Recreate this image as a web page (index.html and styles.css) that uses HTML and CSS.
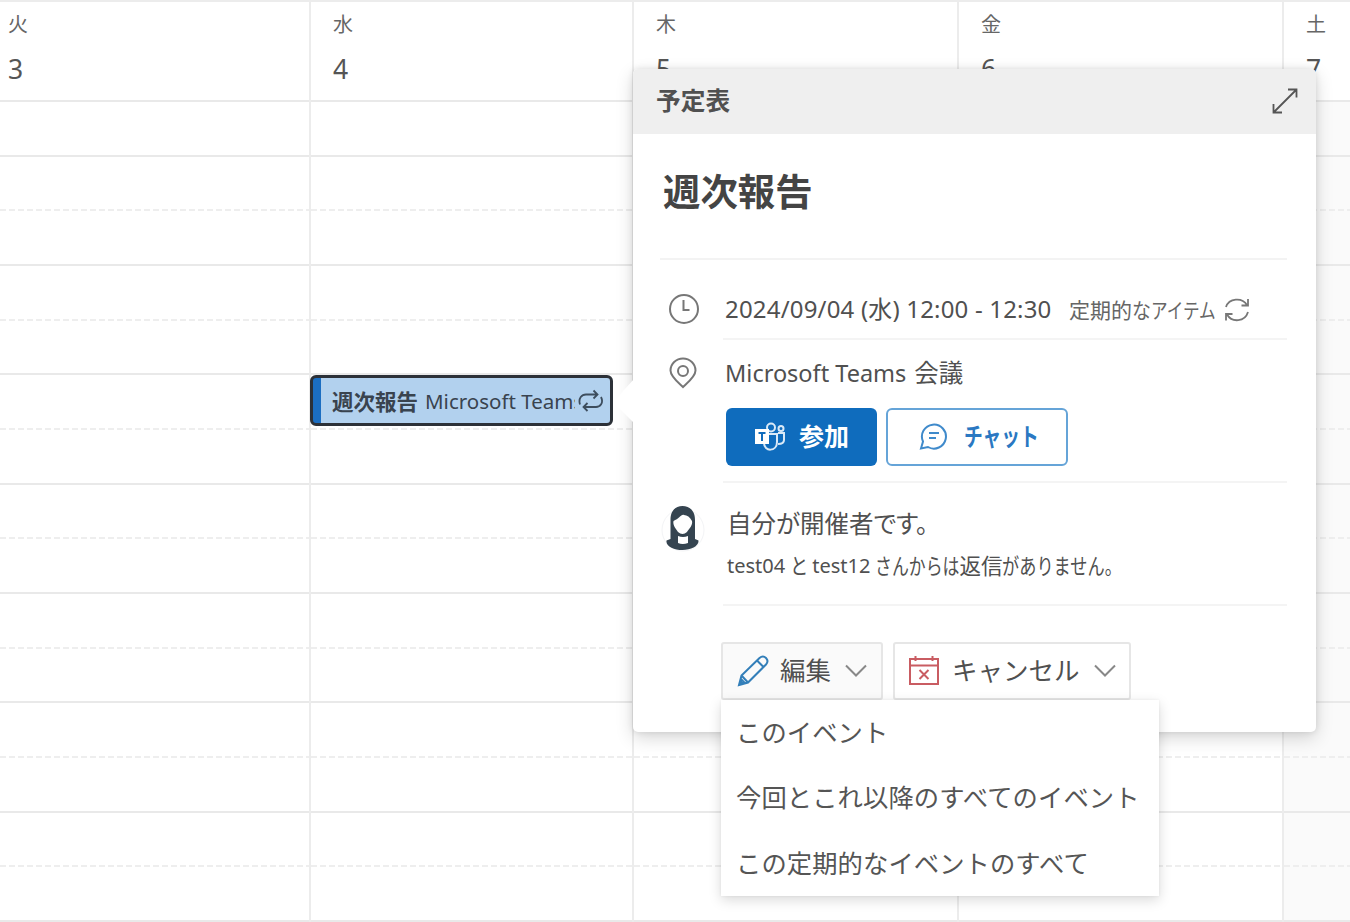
FILE: index.html
```html
<!DOCTYPE html>
<html lang="ja">
<head>
<meta charset="utf-8">
<title>予定表</title>
<link rel="stylesheet" href="styles.css">
</head>
<body>
<main class="calendar">
  <section class="day"><header class="day-head"><span class="weekday">火</span><span class="date">3</span></header><div class="slots"><i></i><i></i><i></i><i></i><i></i><i></i><i></i><i></i><i></i><i></i><i></i><i></i><i></i><i></i><i></i></div></section>
  <section class="day"><header class="day-head"><span class="weekday">水</span><span class="date">4</span></header><div class="slots"><i></i><i></i><i></i><i></i><i></i><i></i><i></i><i></i><i></i><i></i><i></i><i></i><i></i><i></i><i></i></div></section>
  <section class="day"><header class="day-head"><span class="weekday">木</span><span class="date">5</span></header><div class="slots"><i></i><i></i><i></i><i></i><i></i><i></i><i></i><i></i><i></i><i></i><i></i><i></i><i></i><i></i><i></i></div></section>
  <section class="day"><header class="day-head"><span class="weekday">金</span><span class="date">6</span></header><div class="slots"><i></i><i></i><i></i><i></i><i></i><i></i><i></i><i></i><i></i><i></i><i></i><i></i><i></i><i></i><i></i></div></section>
  <section class="day weekend"><header class="day-head"><span class="weekday">土</span><span class="date">7</span></header><div class="slots"><i></i><i></i><i></i><i></i><i></i><i></i><i></i><i></i><i></i><i></i><i></i><i></i><i></i><i></i><i></i></div></section>
</main>

<div class="event">
  <span class="event-title">週次報告</span>
  <span class="event-place">Microsoft Teams</span>
  <svg class="event-icon" width="26" height="24" viewBox="0 0 26 24"><path d="M2 15.500C0 9 4 5.500 8 5.500H19M15.500 1.500L19.500 5.500L15.500 9.500M23 8C26 14 22 18 18 18H6M9.500 14L5.500 18L9.500 22"/></svg>
</div>

<article class="card">
  <svg class="beak" width="21" height="44" viewBox="0 0 21 44"><path d="M21 0L0 23L21 44Z"/></svg>
  <header class="card-head">
    <span>予定表</span>
    <svg width="28" height="28" viewBox="0 0 28 28"><path d="M3 25L25 3M17 2.500H25.500V10.500M2.500 17V25.500H11"/></svg>
  </header>
  <div class="card-body">
    <h1 class="title">週次報告</h1>
    <div class="row row-time">
      <svg class="row-icon" width="32" height="32" viewBox="0 0 32 32"><circle cx="16" cy="16" r="14"/><path d="M15.500 7V17H21.500"/></svg>
      <div class="row-content">
        <span class="when">2024/09/04 (水) 12:00 - 12:30</span>
        <span class="recurring">定期的<span class="kana kana-na">な</span><span class="kana kana-item">アイテム</span></span>
        <svg class="sync" width="26" height="24" viewBox="0 0 26 24"><path d="M2 9C5 0 18 -1 23 7M24 1V7.500H17.500M24 14C21 24 8 25 3 16.500M2 22.500V16H8.500"/></svg>
      </div>
    </div>
    <div class="row row-place">
      <svg class="row-icon" width="32" height="32" viewBox="0 0 32 32"><path d="M15 30C12 27 2.500 20 2.500 13.500A12.500 12 0 0 1 27.500 13.500C27.500 20 18 27 15 30Z"/><circle cx="15" cy="14" r="5"/></svg>
      <div class="row-content">
        <div class="place"><span class="latin">Microsoft Teams</span><span>会議</span></div>
        <div class="actions">
          <button class="btn join">
            <svg width="32" height="30" viewBox="0 0 32 30"><circle cx="17" cy="5.500" r="4"/><circle cx="27" cy="6.500" r="2.500"/><path d="M11 12H23V20C23 30 10 30 10 21M24 11H30V18Q30 22 24 22"/><path class="solid" d="M1 7H15V22H1Z"/><path class="tee" d="M4.500 11H11.500M8 11V19"/></svg>
            <span>参加</span>
          </button>
          <button class="btn chat">
            <svg width="30" height="30" viewBox="0 0 30 30"><path d="M2 27.500L4 20.500A12 12 0 1 1 9 26Z"/><path d="M10 12H20M10 17H17"/></svg>
            <span class="kana kana-chat">チャット</span>
          </button>
        </div>
      </div>
    </div>
    <div class="row row-people">
      <svg class="avatar" width="44" height="48" viewBox="0 0 44 48"><circle class="ring" cx="22" cy="25" r="21"/><path class="hair" d="M9.500 34V15C9.500 5 15 1 21.500 1S34 5 34 15V34L37.500 35.500C38 41 30 45 21.500 45S4.500 41 5.500 35.500Z"/><path class="face" d="M23 10C20 9 18 14 12.500 16C11.500 20 15 24 17 27Q21.500 31 26 27C28 24 32 20 31 16C29 12 26 10 23 10Z"/><path class="face" d="M17 31V38Q21.500 40 27 38V31Q22 33 17 31Z"/></svg>
      <div class="row-content">
        <p class="organizer">自分が開催者です。</p>
        <p class="replies"><span class="latin">test04</span><span class="kana kana-to">と</span><span class="latin">test12</span><span class="kana kana-from">さんからは</span>返信<span class="kana kana-none">がありません。</span></p>
      </div>
    </div>
    <footer class="tools">
      <button class="tool edit">
        <svg width="32" height="32" viewBox="0 0 32 32"><path d="M2 30L4.500 20.500L22.500 3Q26 0 29 3Q32 6 29 9.500L11 27.500ZM20 5.500L26.500 12M4.500 20.500L11 27.500M2 30L5 25L7 27Z"/></svg>
        <span>編集</span>
        <svg class="chevron" width="22" height="14" viewBox="0 0 22 14"><path d="M1 1.500L11 11.500L21 1.500"/></svg>
      </button>
      <button class="tool cancel">
        <svg width="32" height="30" viewBox="0 0 32 30"><path d="M2 3H30V28H2ZM2 9.500H30M7.500 0V5M24.500 0V5"/><path d="M11.500 14L20.500 23M20.500 14L11.500 23"/></svg>
        <span>キャンセル</span>
        <svg class="chevron" width="22" height="14" viewBox="0 0 22 14"><path d="M1 1.500L11 11.500L21 1.500"/></svg>
      </button>
    </footer>
  </div>
</article>

<ul class="menu">
  <li>このイベント</li>
  <li>今回とこれ以降のすべてのイベント</li>
  <li>この定期的なイベントのすべて</li>
</ul>
</body>
</html>
```
FILE: styles.css
```css
* { box-sizing: border-box; }
body {
  margin: 0;
  width: 1350px;
  height: 922px;
  position: relative;
  overflow: hidden;
  background: #fff;
  color: #505050;
  font-family: "Noto Sans", "Noto Sans CJK JP", sans-serif;
}
svg { fill: none; flex: none; }
button, h1, p, ul { margin: 0; padding: 0; font: inherit; color: inherit; }

/* week grid */
.calendar {
  display: grid;
  grid-template-columns: 311px 323px 325px 325px 1fr;
  height: 922px;
}
.day { display: flex; flex-direction: column; border-right: 2px solid #ececec; }
.day:last-child { border-right: 0; }
.day-head {
  height: 102px;
  border-top: 2px solid #ececec;
  border-bottom: 2px solid #e9e9e9;
  padding: 8px 0 0 22px;
  display: flex;
  flex-direction: column;
}
.day:first-child .day-head { padding-left: 8px; }
.weekday { font-size: 20px; line-height: 30px; color: #666; }
.date { font-size: 26.500px; line-height: 36px; margin-top: 11px; color: #555; }
.slots { flex: 1; display: grid; grid-template-rows: repeat(15, 1fr); }
.slots i { border-bottom: 2px solid #e9e9e9; }
.slots i:nth-child(even) {
  border: 0;
  background: repeating-linear-gradient(90deg, #eee 0 6px, transparent 6px 9px) bottom / 100% 2px no-repeat;
}
.weekend .slots { background: #fafafa; }

/* selected event */
.event {
  position: absolute;
  left: 310px;
  top: 375px;
  width: 303px;
  height: 51px;
  border: 3px solid #2c3138;
  border-radius: 6px;
  background: linear-gradient(90deg, #1b6ec2 8px, #b2d1ee 8px);
  display: flex;
  align-items: center;
  padding-left: 19px;
  color: #39434e;
  white-space: nowrap;
}
.event-title { font-size: 21.500px; font-weight: 700; width: 93px; }
.event-place { font-size: 20.500px; width: 150px; overflow: hidden; }
.event-icon { stroke: #3d4d5d; stroke-width: 1.800; margin-left: 3px; }

/* peek card */
.card {
  position: absolute;
  left: 633px;
  top: 69px;
  width: 683px;
  height: 663px;
  border-radius: 5px;
  background: #fff;
  box-shadow: 0 6px 18px rgba(0, 0, 0, .16), 0 0 6px rgba(0, 0, 0, .1);
}
.beak { position: absolute; left: -20px; top: 310px; fill: #fff; }
.card-head {
  height: 65px;
  padding: 0 17px 0 23px;
  border-radius: 5px 5px 0 0;
  background: #efefef;
  display: flex;
  align-items: center;
  justify-content: space-between;
  font-size: 24.700px;
  font-weight: 700;
}
.card-head span { padding-bottom: 5px; }
.card-head svg { stroke: #555; stroke-width: 1.800; margin-bottom: 2px; }
.card-body { padding: 0 29px 0 27px; }
.title {
  height: 126px;
  border-bottom: 2px solid #f3f3f3;
  padding: 31px 0 0 3px;
  font-size: 37.400px;
  line-height: 54px;
  font-weight: 700;
  color: #444;
}
.row { display: grid; grid-template-columns: 63px 1fr; }
.row-content { border-bottom: 2px solid #f4f4f4; padding-left: 2px; }
.row-icon { margin-left: 8px; stroke: #777; stroke-width: 2; }
.row-time .row-content { height: 80px; padding-top: 20px; display: flex; align-items: flex-start; line-height: 60px; }
.row-time .row-icon { margin-top: 33px; }
.when { font-size: 24px; line-height: 58px; letter-spacing: .18px; width: 344px; white-space: nowrap; }
.recurring { font-size: 21px; white-space: nowrap; width: 151px; color: #666; display: flex; }
.sync { margin-top: 18px; margin-left: 4px; stroke: #777; stroke-width: 1.800; }
.kana { display: block; flex: none; white-space: nowrap; transform-origin: 0 50%; }
.kana-na { width: 19px; transform: scaleX(.9); }
.kana-item { width: 66px; transform: scaleX(.79); }
.row-place .row-content { height: 143px; padding-top: 13px; }
.row-place .row-icon { margin-top: 17px; }
.place { display: flex; gap: 8px; font-size: 24.500px; line-height: 40px; }
.place .latin { font-size: 23.500px; }
.actions { display: flex; gap: 9px; margin: 15px 0 0 1px; }
.btn {
  height: 58px;
  border-radius: 6px;
  display: flex;
  align-items: center;
  font-size: 25px;
  font-weight: 700;
  border: 0;
}
.btn span { padding-bottom: 4px; }
.join { width: 151px; padding-left: 28px; gap: 13px; background: #0f6cbd; color: #fff; }
.join svg { stroke: #d9e9f7; stroke-width: 2; }
.join .solid { fill: #fff; stroke: none; }
.join .tee { stroke: #0f6cbd; }
.chat { width: 182px; padding-left: 31px; gap: 15px; background: #fff; color: #2a78c2; border: 2px solid #65a4d8; }
.chat svg { stroke: #3f8acb; stroke-width: 2; margin-bottom: 2px; }
.kana-chat { transform: scaleX(.75); width: 75px; }
.row-people .row-content { height: 123px; padding: 21px 0 0 4px; }
.avatar { margin: 22px 0 0 1px; }
.avatar .ring { stroke: #f3f4f6; }
.avatar .hair { fill: #354450; }
.avatar .face { fill: #fff; }
.organizer { font-size: 24.500px; line-height: 40px; font-feature-settings: "palt"; }
.replies { font-size: 21.500px; line-height: 40px; margin-top: 2px; display: flex; white-space: nowrap; }
.replies .latin { font-size: 20px; }
.kana-to { width: 17px; margin: 0 5px; transform: scaleX(.85); }
.kana-from { width: 84px; margin-left: 5px; transform: scaleX(.785); }
.kana-none { width: 118px; transform: scaleX(.8); }
.tools { display: flex; gap: 10px; padding: 36px 0 0 61px; }
.tool {
  height: 58px;
  border: 2px solid #e6e6e6;
  border-radius: 3px;
  background: #fff;
  display: flex;
  align-items: center;
  font-size: 25.500px;
}
.tool span { padding-bottom: 5px; }
.edit { width: 162px; padding-left: 14px; background: #fafafa; }
.edit svg { stroke: #337fb9; stroke-width: 2; margin-right: 11px; }
.cancel { width: 238px; padding-left: 13px; }
.cancel svg { stroke: #c95c62; stroke-width: 2; margin-right: 12px; }
.tool .chevron { stroke: #888; margin: 0 0 0 14px; }

/* edit drop-down */
.menu {
  position: absolute;
  left: 721px;
  top: 700px;
  width: 438px;
  height: 196px;
  padding-left: 15px;
  list-style: none;
  background: #fff;
  box-shadow: 0 4px 12px rgba(0, 0, 0, .15), 0 0 3px rgba(0, 0, 0, .06);
  font-size: 25.300px;
  letter-spacing: .1px;
  line-height: 65.300px;
  color: #555;
  white-space: nowrap;
}
```
